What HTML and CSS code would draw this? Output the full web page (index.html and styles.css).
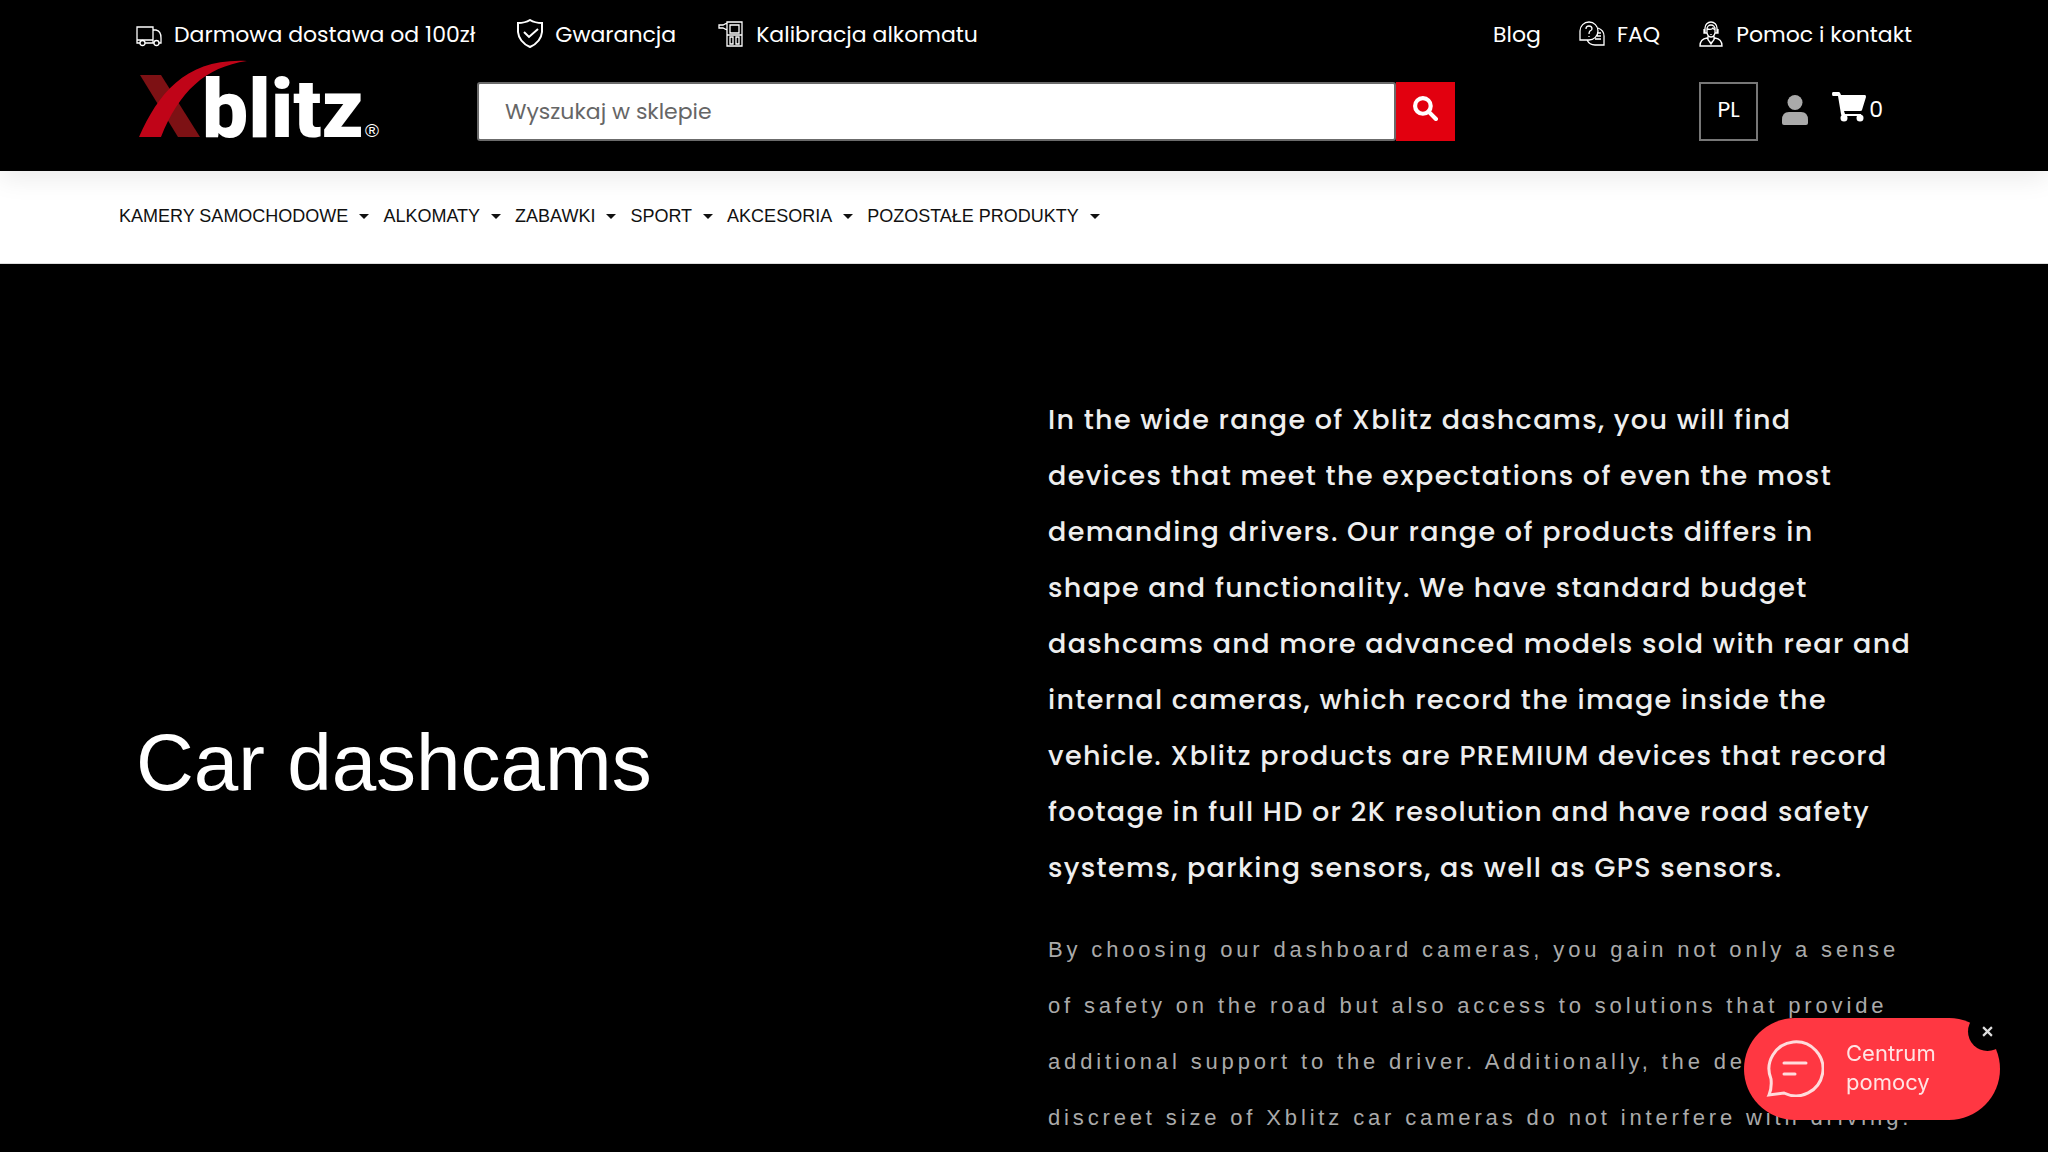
FILE: index.html
```html
<!DOCTYPE html>
<html lang="pl">
<head>
  <meta charset="UTF-8">
  <meta name="viewport" content="width=device-width, initial-scale=1">
  <title>Xblitz | Car dashcams</title>
  <link rel="stylesheet" href="styles.css">
</head>

<body>
  <header class="header">
    <div class="topbar">
      <a class="top-link" href="#">
        <svg class="icon" viewBox="0 0 26 26"><path d="M4 22H1V6h16v16H9M17 9h3q5 1 5 8v5h-2M18 22h-1M1 19h16"/><circle cx="6.500" cy="22" r="2.500"/><circle cx="20.500" cy="22" r="2.500"/></svg>
        Darmowa dostawa od 100zł
      </a>
      <a class="top-link" href="#">
        <svg class="icon icon-shield" viewBox="0 0 26 30"><path d="M13 1Q18 4 25 4V13Q24 23 13 28Q2 23 1 13V4Q8 4 13 1ZM7 13l5 5 9-8"/></svg>
        Gwarancja
      </a>
      <a class="top-link" href="#">
        <svg class="icon" viewBox="0 0 26 26"><path d="M9 1h15v24H9zM12 4h9v8h-9zM12 16h3v7h-3zM18 16h3v7h-3zM9 14h15M9 2L5 4H1v3h4l4 2"/></svg>
        Kalibracja alkomatu
      </a>
      <nav class="top-right">
        <a class="top-link" href="#">Blog</a>
        <a class="top-link" href="#">
          <svg class="icon" viewBox="0 0 26 26"><path d="M1 19v-9a9 9 0 1 1 9 9zM19 7a9 9 0 0 1 6 9v8h-9a9 9 0 0 1-8-5M7 8q0-3 3-3t3 3q0 1-2 2-1 1-1 3M10 15v1M18 12h4M18 15h4M16 18h6"/></svg>
          FAQ
        </a>
        <a class="top-link" href="#">
          <svg class="icon" viewBox="0 0 26 26"><path d="M2 25q0-7 7-8l4 6 4-6q7 1 7 8zM7 12V7a6 6 0 0 1 12 0v5M9 8a4 4 0 0 1 8 0M6 8v4h3V8q5 1 6-1 1 2 2 1v4h3V8M9 12q1 4 4 4t4-4M10 15v3M16 15v3M10 19l3 3 3-3M13 13v1"/></svg>
          Pomoc i kontakt
        </a>
      </nav>
    </div>

    <div class="mainbar">
      <a class="logo" href="#" aria-label="Xblitz">
        <svg class="logo-svg" viewBox="0 0 260 100">
          <path class="logo-dark" d="M1 15h21l39 62H39z"/>
          <path class="logo-red" d="M0 77C20 32 48-2 108 1 66 7 40 32 22 77z"/>
          <text class="logo-text" x="63" y="77">blitz</text>
          <text class="logo-reg" x="226" y="77">®</text>
        </svg>
      </a>
      <form class="search">
        <input class="search-input" type="text" placeholder="Wyszukaj w sklepie" aria-label="Wyszukaj w sklepie">
        <button class="search-btn" type="button" aria-label="Szukaj">
          <svg class="search-icon" viewBox="0 0 24 24"><circle cx="9.500" cy="9.500" r="7.500"/><path d="M15 15l7 7"/></svg>
        </button>
      </form>
      <div class="tools">
        <button class="lang" type="button">PL</button>
        <a class="user" href="#" aria-label="Konto">
          <svg class="user-icon" viewBox="0 0 26 30"><circle cx="13" cy="7.500" r="7.500"/><path d="M0 28v-3q0-8 7-8h12q7 0 7 8v3q0 2-2 2H2q-2 0-2-2z"/></svg>
        </a>
        <a class="cart" href="#">
          <svg class="cart-icon" viewBox="0 0 34 30"><path d="M1 0h6q1 0 2 3h24q1 0 1 2l-4 13q0 1-2 1H12l1 3h16v2H11Q9 24 9 22L6 4H1Q0 4 0 2T1 0z"/><circle cx="12" cy="26" r="3.500"/><circle cx="28" cy="26" r="3.500"/></svg>0
        </a>
      </div>
    </div>
  </header>

  <nav class="menu">
    <button class="menu-item" type="button">KAMERY SAMOCHODOWE</button>
    <button class="menu-item" type="button">ALKOMATY</button>
    <button class="menu-item" type="button">ZABAWKI</button>
    <button class="menu-item" type="button">SPORT</button>
    <button class="menu-item" type="button">AKCESORIA</button>
    <button class="menu-item" type="button">POZOSTAŁE PRODUKTY</button>
  </nav>

  <main class="hero">
    <h1 class="hero-title">Car dashcams</h1>
    <div class="hero-text">
      <p class="lead">In the wide range of Xblitz dashcams, you will find<br>devices that meet the expectations of even the most<br>demanding drivers. Our range of products differs in<br>shape and functionality. We have standard budget<br>dashcams and more advanced models sold with rear and<br>internal cameras, which record the image inside the<br>vehicle. Xblitz products are PREMIUM devices that record<br>footage in full HD or 2K resolution and have road safety<br>systems, parking sensors, as well as GPS sensors.</p>
      <p class="desc">By choosing our dashboard cameras, you gain not only a sense<br>of safety on the road but also access to solutions that provide<br>additional support to the driver. Additionally, the design and<br>discreet size of Xblitz car cameras do not interfere with driving.</p>
    </div>
  </main>

  <div class="help">
    <button class="help-btn" type="button">
      <svg class="help-icon" viewBox="0 0 58 58"><path d="M5 40A27 27 0 1 1 18 54L3 56Q6 49 5 40zM18 24h22M18 35h11"/></svg>
      <span>Centrum<br>pomocy</span>
    </button>
    <button class="help-close" type="button" aria-label="Zamknij">
      <svg class="close-icon" viewBox="0 0 10 10"><path d="M1 1l8 8M9 1L1 9"/></svg>
    </button>
  </div>
</body>
</html>
```
FILE: styles.css
```css
* { margin: 0; padding: 0; box-sizing: border-box; }

body {
  font-family: 'Poppins', 'Inter', sans-serif;
  background: #000;
  color: white;
  height: 100vh;
  overflow: hidden;
}

a {
  color: inherit;
  text-decoration: none;
}

button {
  border: none;
  background: none;
  color: inherit;
  font: inherit;
  cursor: pointer;
}

.header {
  position: relative;
  height: 171px;
  padding: 8px 136px 0;
  background: #000;
  box-shadow: 0 8px 24px rgba(0, 0, 0, 0.08);
}

.topbar {
  display: flex;
  gap: 42px;
  height: 52px;
  font-size: 22px;
}

.top-link {
  display: flex;
  align-items: center;
  gap: 12px;
  white-space: nowrap;
}

.top-right {
  display: flex;
  gap: 38px;
  margin-left: auto;
}

.icon {
  width: 26px;
  height: 26px;
  fill: none;
  stroke: white;
  stroke-width: 1.3;
}

.icon-shield {
  height: 30px;
  stroke-width: 2;
}

.mainbar {
  display: flex;
  align-items: center;
  height: 103px;
}

.logo {
  align-self: flex-start;
  width: 341px;
  padding-left: 3px;
}

.logo-svg {
  display: block;
  width: 260px;
  height: 100px;
}

.logo-dark { fill: #7d1114; }
.logo-red { fill: #c00418; }

.logo-text {
  fill: white;
  font-family: 'Roboto', sans-serif;
  font-size: 82px;
  font-weight: 900;
}

.logo-reg {
  fill: white;
  font-family: 'Liberation Sans', sans-serif;
  font-size: 19px;
}

.search {
  display: flex;
  width: 978px;
  height: 59px;
}

.search-input {
  flex: 1;
  padding: 0 26px;
  border: 2px solid #6b6b6b;
  border-radius: 3px;
  background: white;
  font: inherit;
  font-size: 22px;
}

.search-input::placeholder { color: #666; }

.search-btn {
  width: 59px;
  background: #e2000f;
}

.search-icon {
  width: 25px;
  height: 25px;
  fill: none;
  stroke: white;
  stroke-width: 4;
  stroke-linecap: round;
}

.tools {
  display: flex;
  align-items: center;
  gap: 24px;
  margin-left: auto;
  padding-right: 29px;
  font-size: 22px;
}

.lang {
  width: 59px;
  height: 59px;
  padding-bottom: 4px;
  border: 2px solid #777;
}

.user {
  padding-bottom: 4px;
}

.user-icon {
  display: block;
  width: 26px;
  height: 30px;
  fill: #aaa;
}

.cart {
  display: flex;
  align-items: center;
  gap: 3px;
  padding-bottom: 4px;
}

.cart-icon {
  width: 34px;
  height: 30px;
  margin-bottom: 6px;
  fill: white;
}

.menu {
  display: flex;
  gap: 14px;
  height: 93px;
  padding: 0 119px;
  background: white;
  border-bottom: 1px solid #ddd;
  color: #111;
  font-family: 'Liberation Sans', sans-serif;
  font-size: 18px;
}

.menu-item {
  display: flex;
  align-items: center;
  gap: 11px;
  height: 90px;
}

.menu-item::after {
  content: '';
  border: 5px solid transparent;
  border-top-color: #111;
  border-bottom: 0;
}

.hero {
  display: grid;
  grid-template-columns: minmax(0, 1fr) minmax(0, 1fr);
  column-gap: 48px;
  padding: 128px 136px 0;
}

.hero-title {
  padding-top: 323px;
  font-family: 'Liberation Sans', sans-serif;
  font-size: 80px;
  font-weight: 400;
  line-height: 96px;
}

.hero-text {
  white-space: nowrap;
  line-height: 56px;
}

.lead {
  color: #eee;
  font-size: 27px;
  font-weight: 500;
  letter-spacing: 0.05em;
}

.desc {
  margin-top: 26px;
  color: #aaa;
  font-family: 'Liberation Sans', sans-serif;
  font-size: 22px;
  letter-spacing: 0.175em;
}

.help {
  position: fixed;
  right: 48px;
  bottom: 32px;
}

.help-btn {
  display: flex;
  align-items: center;
  gap: 22px;
  width: 256px;
  height: 102px;
  padding: 0 0 2px 22px;
  border-radius: 51px;
  background: #ff3742;
  color: #ffe4e4;
  font-family: 'Inter', sans-serif;
  font-size: 22px;
  line-height: 29px;
  text-align: left;
}

.help-icon {
  width: 58px;
  height: 58px;
  fill: none;
  stroke: #ffdcdc;
  stroke-width: 3;
  stroke-linecap: round;
}

.help-close {
  position: absolute;
  top: -6px;
  right: -7px;
  width: 39px;
  height: 39px;
  border-radius: 50%;
  background: #000;
}

.close-icon {
  width: 11px;
  height: 11px;
  stroke: #ddd;
  stroke-width: 2;
}
```
